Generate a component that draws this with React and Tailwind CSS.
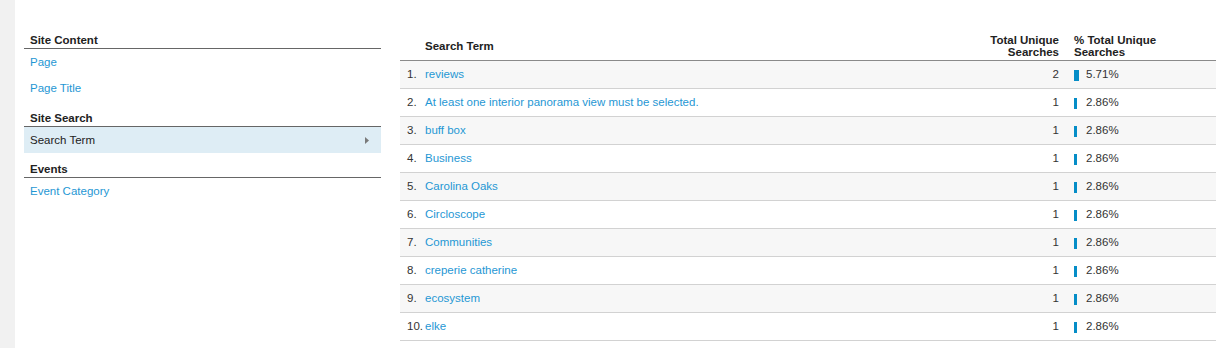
import React from "react";

const groups = [
  { title: "Site Content", items: ["Page", "Page Title"] },
  { title: "Site Search", items: ["Search Term"], active: "Search Term" },
  { title: "Events", items: ["Event Category"] },
];

const rows = [
  ["reviews", 2, "5.71%", 5.71],
  ["At least one interior panorama view must be selected.", 1, "2.86%", 2.86],
  ["buff box", 1, "2.86%", 2.86],
  ["Business", 1, "2.86%", 2.86],
  ["Carolina Oaks", 1, "2.86%", 2.86],
  ["Circloscope", 1, "2.86%", 2.86],
  ["Communities", 1, "2.86%", 2.86],
  ["creperie catherine", 1, "2.86%", 2.86],
  ["ecosystem", 1, "2.86%", 2.86],
  ["elke", 1, "2.86%", 2.86],
];

const Sidebar = () => (
  <div className="w-[357px] shrink-0">
    {groups.map((g, gi) => (
      <div key={g.title} className={gi === 0 ? "" : gi === 1 ? "mt-[9px]" : "mt-[8px]"}>
        <div className="h-[17px] pl-[6px] leading-[16px] font-bold text-[#222] border-b border-[#666]">
          {g.title}
        </div>
        {g.items.map((item) =>
          item === g.active ? (
            <div
              key={item}
              className="h-[26px] pl-[6px] pr-[12px] pt-[1px] flex items-center justify-between bg-[#deedf5] text-[#222]"
            >
              <span>{item}</span>
              <svg width="4" height="7" viewBox="0 0 4 7">
                <path d="M0 0L4 3.5L0 7Z" fill="#7a7a7a" />
              </svg>
            </div>
          ) : (
            <div key={item} className="h-[26px] pl-[6px] pt-[1px] flex items-center text-[#1f97d4]">
              {item}
            </div>
          )
        )}
      </div>
    ))}
  </div>
);

const ReportTable = () => (
  <div className="w-[816px] shrink-0">
    <div className="h-[29px] flex items-center border-b border-[#8a8a8a] font-bold text-[#222] leading-[12px]">
      <div className="w-[25px] shrink-0" />
      <div className="flex-1">Search Term</div>
      <div className="w-[100px] text-right">
        Total Unique
        <br />
        Searches
      </div>
      <div className="w-[157px] pl-[15px]">
        % Total Unique
        <br />
        Searches
      </div>
    </div>
    {rows.map(([term, count, pct, value], i) => (
      <div
        key={term}
        className={`h-[28px] pt-[1px] flex items-center border-b border-[#d2d2d2] ${
          i % 2 === 0 ? "bg-[#f7f7f7]" : "bg-white"
        }`}
      >
        <div className="w-[25px] shrink-0 pl-[7px] text-[#333]">{i + 1}.</div>
        <div className="flex-1 text-[#1f97d4]">{term}</div>
        <div className="w-[100px] text-right text-[#333]">{count}</div>
        <div className="w-[157px] pl-[15px] flex items-center text-[#333]">
          <div className="w-[12px] flex">
            <div className="h-[11px] bg-[#058dc7]" style={{ width: `${value * 0.9}px` }} />
          </div>
          <span>{pct}</span>
        </div>
      </div>
    ))}
  </div>
);

export default function App() {
  return (
    <div className="h-[348px] w-[1222px] flex bg-white text-[11.5px] font-['Liberation_Sans',Arial,sans-serif] overflow-hidden">
      <div className="w-[15px] shrink-0 bg-[#f1f1f1]" />
      <div className="flex pl-[9px] pt-[32px] gap-[19px]">
        <Sidebar />
        <ReportTable />
      </div>
    </div>
  );
}
